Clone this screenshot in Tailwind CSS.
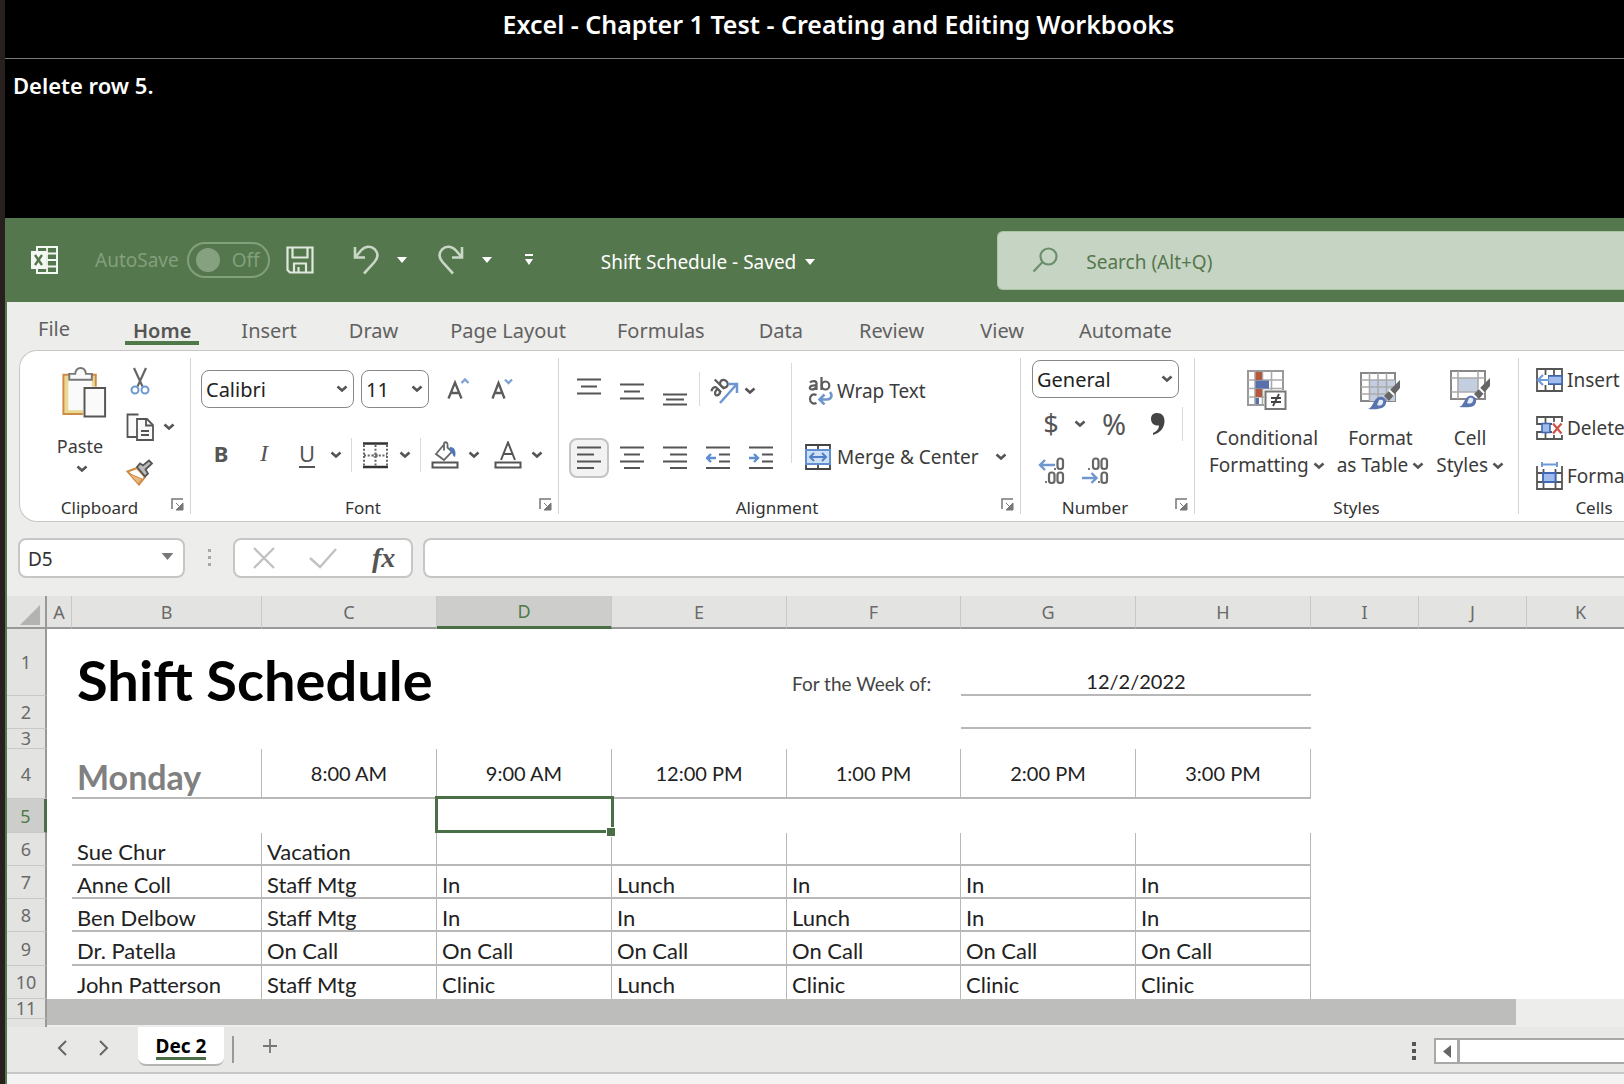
<!DOCTYPE html>
<html lang="en">
<head>
<meta charset="utf-8">
<title>Shift Schedule - Saved</title>
<script src="https://cdn.jsdelivr.net/npm/@tailwindcss/browser@4"></script>
</head>
<body class="min-h-screen overflow-x-hidden bg-[#281f1f] pl-[5px] font-['Noto_Sans',sans-serif] text-[#3b3b3b]">

<!-- shared icon shapes -->
<svg class="hidden" aria-hidden="true">
  <symbol id="chev" viewBox="0 0 12 8"><path d="M1.500 1.500 6 5.500l4.500-4" fill="none" stroke="#555" stroke-width="2.600"/></symbol>
  <symbol id="tri" viewBox="0 0 10 6"><path d="M0 0h10L5 6z" fill="currentColor"/></symbol>
  <symbol id="launch" viewBox="0 0 13 13"><path d="M1 11V1h11" fill="none" stroke="#777" stroke-width="1.500"/><path d="M5 5l6 6M12 5v7H5z" fill="#777" stroke="#777"/></symbol>
</svg>

<!-- task header -->
<header class="h-[218px] bg-black text-white">
  <h1 class="h-[59px] border-b border-[#777] pt-[3px] pl-[48px] text-center text-[25px] leading-[42px] font-semibold">Excel - Chapter 1 Test - Creating and Editing Workbooks</h1>
  <p class="px-2 pt-[10px] text-[22px] leading-8 font-semibold">Delete row 5.</p>
</header>

<div class="overflow-hidden bg-[#ededeb]">
  <!-- title bar -->
  <div class="flex h-[84px] items-center bg-[#55774d] pl-[26px] text-[19px] text-white">
    <svg class="h-[28px] w-[28px]" viewBox="0 0 28 28"><path d="M6 1h20v26H6z" fill="none" stroke="#f4f8f3" stroke-width="2"/><path d="M16 1v26M6 7.500h20M16 14h10M6 20.500h20" stroke="#f4f8f3" stroke-width="1.800"/><path d="M0 5h15v18H0z" fill="#f4f8f3"/><path d="M4 9l7 10M11 9L4 19" stroke="#55774d" stroke-width="2.400"/></svg>
    <label class="ml-[36px] flex items-center text-[#83a07d]">AutoSave
      <input type="checkbox" class="sr-only">
      <span class="ml-2 flex h-9 w-[83px] items-center justify-between rounded-full border-2 border-[#83a07d] pr-2 pl-[7px]"><span class="h-6 w-6 rounded-full bg-[#86a180]"></span>Off</span>
    </label>
    <button class="ml-4" aria-label="Save"><svg class="h-7 w-7" viewBox="0 0 28 28" fill="none" stroke="#dfe8dd" stroke-width="2.200"><path d="M1.500 1.500h25v25H4l-2.500-2.500zM6.500 2v9.500h15V2M8 26v-8.500h12V26M12.500 21v5"/></svg></button>
    <div class="ml-[39px] flex items-center gap-[18px]">
      <button aria-label="Undo"><svg class="h-[30px] w-[26px]" viewBox="0 0 26 30" fill="none" stroke="#c9d7c6" stroke-width="2.600"><path d="M2 2v10.500h10M2.500 12 8 5.500C12 1 18 .5 22 4.500c3.500 4 3 8.500-.5 12.500L11 28.500"/></svg></button>
      <button aria-label="Undo options"><svg class="h-[6px] w-[10px]"><use href="#tri"/></svg></button>
    </div>
    <div class="ml-[31px] flex items-center gap-[18px]">
      <button aria-label="Redo"><svg class="h-[30px] w-[26px]" viewBox="0 0 26 30" fill="none" stroke="#c9d7c6" stroke-width="2.600"><path d="M24 2v10.500H14M23.500 12 18 5.500C14 1 8 .5 4 4.500.5 8.500 1 13 4.500 17L15 28.500"/></svg></button>
      <button aria-label="Redo options"><svg class="h-[6px] w-[10px]"><use href="#tri"/></svg></button>
    </div>
    <button class="ml-8" aria-label="Customize toolbar"><svg class="h-3 w-[10px]" viewBox="0 0 10 12" fill="#fff"><path d="M1 0h8v2H1zM1 5h8l-4 6z"/></svg></button>
    <button class="ml-[67px] flex items-center gap-[9px] pt-1 whitespace-nowrap">Shift Schedule - Saved <svg class="h-[6px] w-[10px]"><use href="#tri"/></svg></button>
    <label class="ml-[182px] flex h-[59px] min-w-0 flex-1 items-center gap-[28px] rounded-l-md border border-r-0 border-[#a9c3a3] bg-[#c6d4c3] pl-[34px]">
      <svg class="h-[26px] w-[26px] shrink-0" viewBox="0 0 26 26" fill="none" stroke="#6b8f6c" stroke-width="2.200"><circle cx="16.500" cy="9.500" r="8"/><path d="M10.500 15 1.500 24.500"/></svg>
      <input type="text" placeholder="Search (Alt+Q)" aria-label="Search" class="min-w-0 flex-1 pt-1 outline-none placeholder:text-[#55774d]">
    </label>
  </div>

  <div class="border-l-2 border-[#55774d]">
    <!-- ribbon tabs -->
    <nav class="flex h-[48px] pt-[13px] text-[20px] leading-8 whitespace-nowrap text-[#616161]">
      <a href="#" class="-mt-[2px] ml-[31px]">File</a>
      <a href="#" class="ml-[55px] h-[30px] border-b-4 border-[#4e7a49] px-2 font-semibold text-[#555]">Home</a>
      <a href="#" class="ml-[42px]">Insert</a>
      <a href="#" class="ml-[52px]">Draw</a>
      <a href="#" class="ml-[52px]">Page Layout</a>
      <a href="#" class="ml-[51px]">Formulas</a>
      <a href="#" class="ml-[54px]">Data</a>
      <a href="#" class="ml-[56px]">Review</a>
      <a href="#" class="ml-[56px]">View</a>
      <a href="#" class="ml-[55px]">Automate</a>
    </nav>

    <!-- ribbon -->
    <div class="ml-3 flex h-[172px] rounded-l-[18px] border border-r-0 border-[#c6c6c6] bg-white text-[17px] whitespace-nowrap">
      <!-- Clipboard -->
      <section class="my-[7px] flex w-[171px] shrink-0 flex-col border-r border-[#d4d4d4]">
        <div class="flex h-[143px] shrink-0 pt-[9px]">
          <button class="ml-[36px] flex w-[52px] flex-col items-center self-start">
            <svg class="ml-1 h-[51px] w-[48px]" viewBox="0 0 48 52"><path d="M3 8h33v40H3z" fill="#ead994" stroke="#cf8a45" stroke-width="2"/><path d="M8 12h24v32H8z" fill="#fafafa"/><path d="M9 13V7h6c1-8 10-8 11 0h6v6z" fill="#fafafa" stroke="#777" stroke-width="2"/><path d="M23 20h25v32H23z" fill="#fff"/><path d="M24.500 21.500h21v29h-21z" fill="#fafafa" stroke="#555" stroke-width="2"/></svg>
            <span class="mt-4 pr-1 text-[18px] leading-6">Paste</span>
            <svg class="mt-[7px] h-2 w-3"><use href="#chev"/></svg>
          </button>
          <div class="ml-[18px] flex flex-col items-start gap-[18px]">
            <button class="ml-1" aria-label="Cut"><svg class="h-[28px] w-[20px]" viewBox="0 0 20 28" fill="none"><path d="M4 1l8.500 18.500M16 1 7.500 19.500" stroke="#666" stroke-width="2.200"/><circle cx="5" cy="23" r="3.500" stroke="#6f9ad0" stroke-width="2"/><circle cx="15" cy="23" r="3.500" stroke="#6f9ad0" stroke-width="2"/></svg></button>
            <div class="flex items-center gap-[9px]">
              <button aria-label="Copy"><svg class="h-[28px] w-[28px]" viewBox="0 0 28 28" stroke="#555" stroke-width="1.800" fill="#fafafa"><path d="M11 24H1.500V1.500h11"/><path d="M11 6h10l6 6v15H11z"/><path d="M20 6v6.500h6.500M15 18h8M15 22h8" fill="none"/></svg></button>
              <button aria-label="Copy options"><svg class="h-2 w-3"><use href="#chev"/></svg></button>
            </div>
            <button aria-label="Format Painter"><svg class="h-[27px] w-[27px]" viewBox="0 0 27 27"><path d="M1.500 12.500 11 9l8 9-6 7.500z" fill="#fff" stroke="#cf8a45" stroke-width="2"/><path d="M3 14.500l13 5.500-4 5z" fill="#e9b77c" stroke="#cf8a45"/><path d="M11 8l8 9.500 3-3-2.500-4L26 4.500 23 1.500l-6 5-3-2z" fill="#bbb" stroke="#555" stroke-width="1.800"/></svg></button>
          </div>
        </div>
        <div class="flex items-start text-[#333]"><span class="flex-1 pl-2 text-center leading-[13px]">Clipboard</span><button class="-mt-[3px] mr-[6px]" aria-label="Clipboard settings"><svg class="h-[13px] w-[13px]"><use href="#launch"/></svg></button></div>
      </section>

      <!-- Font -->
      <section class="my-[7px] flex w-[368px] shrink-0 flex-col border-r border-[#d4d4d4]">
        <div class="h-[143px] shrink-0 pt-3">
          <div class="flex items-center pl-[10px]">
            <span class="relative flex items-center"><select aria-label="Font" class="h-[38px] w-[153px] appearance-none rounded-lg border border-[#888] pt-px pl-1 text-[20px] text-[#222]"><option>Calibri</option></select><svg class="pointer-events-none absolute right-[6px] h-2 w-3"><use href="#chev"/></svg></span>
            <span class="relative ml-[7px] flex items-center"><select aria-label="Font size" class="h-[38px] w-[68px] appearance-none rounded-lg border border-[#888] pt-px pl-1 text-[20px] text-[#222]"><option>11</option></select><svg class="pointer-events-none absolute right-[6px] h-2 w-3"><use href="#chev"/></svg></span>
            <button class="ml-[18px]" aria-label="Increase font size"><svg class="h-[24px] w-[24px]" viewBox="0 0 24 24" fill="none"><path d="M1.500 21.500 8 5.500 14.500 21.500M4 16h8" stroke="#5c5c5c" stroke-width="2.300"/><path d="M14.500 6 18 2.500 21.500 6" stroke="#7fa3d4" stroke-width="2.400"/></svg></button>
            <button class="ml-[20px]" aria-label="Decrease font size"><svg class="h-[24px] w-[24px]" viewBox="0 0 24 24" fill="none"><path d="M1.500 21.500 7.500 6 13.500 21.500M4 16h7" stroke="#5c5c5c" stroke-width="2.300"/><path d="M14 2.500 17.500 6 21 2.500" stroke="#7fa3d4" stroke-width="2.400"/></svg></button>
          </div>
          <div class="mt-6 flex h-[46px] items-center pl-4 text-[22px] text-[#555]">
            <div class="-mt-1 flex gap-[15px]">
              <button class="w-7 font-bold">B</button>
              <button class="w-7 font-['Liberation_Serif',serif] text-[24px] italic">I</button>
              <button class="w-7 underline decoration-2 underline-offset-4">U</button>
            </div>
            <button class="mr-[9px] ml-[9px]" aria-label="Underline options"><svg class="h-2 w-3"><use href="#chev"/></svg></button>
            <div class="flex h-[34px] items-center border-x border-[#d9d9d9] pr-[9px] pl-[10px]">
              <button aria-label="Borders"><svg class="h-[27px] w-[27px]" viewBox="0 0 27 27" fill="none"><path d="M1 1.500h25M1 25h25" stroke="#333" stroke-width="2.400"/><path d="M2 3v21M25 3v21M13.500 3v21M2 13.500h23" stroke="#666" stroke-width="2" stroke-dasharray="2 1.700"/><circle cx="13.500" cy="13.500" r="2" stroke="#777"/></svg></button>
              <button class="ml-[10px]" aria-label="Border options"><svg class="h-2 w-3"><use href="#chev"/></svg></button>
            </div>
            <button class="ml-[10px]" aria-label="Fill color"><svg class="h-[28px] w-[28px]" viewBox="0 0 28 28" fill="none"><path d="M1.500 21.500h25v5h-25z" stroke="#555" stroke-width="2"/><path d="M13 3.500 5 13l8 6 8-8.500-4.500-4V3.500c0-3-3.500-3-3.500 0v6" stroke="#666" stroke-width="1.800"/><path d="M19 6c5 0 6.500 5 5 10-2 0-2-4-5-6z" fill="#4d78bb"/></svg></button>
            <button class="ml-[9px]" aria-label="Fill options"><svg class="h-2 w-3"><use href="#chev"/></svg></button>
            <button class="ml-[14px]" aria-label="Font color"><svg class="h-[28px] w-[28px]" viewBox="0 0 28 28" fill="none" stroke="#555" stroke-width="2"><path d="M1.500 21.500h25v5h-25zM7 19 14 1.500 21 19M9.500 13h9"/></svg></button>
            <button class="ml-[9px]" aria-label="Font color options"><svg class="h-2 w-3"><use href="#chev"/></svg></button>
          </div>
        </div>
        <div class="flex items-start text-[#333]"><span class="flex-1 pr-1 text-center leading-[13px]">Font</span><button class="-mt-[3px] mr-[6px]" aria-label="Font settings"><svg class="h-[13px] w-[13px]"><use href="#launch"/></svg></button></div>
      </section>

      <!-- Alignment -->
      <section class="my-[7px] flex w-[462px] shrink-0 flex-col border-r border-[#d4d4d4]">
        <div class="flex h-[143px] shrink-0">
          <div class="mt-[5px] h-[100px] w-[233px] border-r border-[#d9d9d9] pt-[7px] pl-[10px]">
            <div class="flex h-[38px] items-center">
              <div class="flex gap-[3px]">
                <button class="flex w-10 justify-center" aria-label="Top align"><svg class="h-[30px] w-6" viewBox="0 0 24 30"><path d="M0 5.500h24M4 12.500h16M0 19.500h24" stroke="#555" stroke-width="2"/></svg></button>
                <button class="flex w-10 justify-center" aria-label="Middle align"><svg class="h-[30px] w-6" viewBox="0 0 24 30"><path d="M0 10.500h24M4 17.500h16M0 24.500h24" stroke="#555" stroke-width="2"/></svg></button>
                <button class="flex w-10 justify-center" aria-label="Bottom align"><svg class="h-[30px] w-6 overflow-visible" viewBox="0 0 24 30"><path d="M0 20.500h24M3 25.500h18M0 30.500h24" stroke="#555" stroke-width="2"/></svg></button>
              </div>
              <div class="ml-[4px] flex h-[34px] items-center gap-[5px] border-l border-[#d9d9d9] pl-[9px]">
                <button aria-label="Orientation"><svg class="h-[30px] w-[30px]" viewBox="0 0 30 30" fill="none"><g stroke="#5c5c5c" stroke-width="2.300"><g transform="rotate(-45 10 14)"><path d="M2.500 11c2-2 6-1.500 6 1.500v6M8.500 13.500c-7 0-7 5-3 5 2 0 3-1.500 3-3"/><path d="M13 5v13.500"/><ellipse cx="16.500" cy="14.500" rx="3.500" ry="4"/></g></g><path d="M11 29 27 11M19 10h9v9" stroke="#6f97cd" stroke-width="2.500"/></svg></button>
                <button aria-label="Orientation options"><svg class="mt-1 h-2 w-3"><use href="#chev"/></svg></button>
              </div>
            </div>
            <div class="mt-[30px] flex gap-[3px]">
              <button class="flex h-10 w-10 items-center justify-center rounded-lg border-2 border-[#c4c4c4] bg-[#f2f2f2]" aria-label="Align left"><svg class="h-6 w-6 shrink-0" viewBox="0 0 24 24"><path d="M0 1.500h24M0 8.500h17M0 15.500h24M0 22h17" stroke="#555" stroke-width="2"/></svg></button>
              <button class="flex h-10 w-10 items-center justify-center" aria-label="Center"><svg class="h-6 w-6" viewBox="0 0 24 24"><path d="M0 1.500h24M4 8.500h16M0 15.500h24M4 22h16" stroke="#555" stroke-width="2"/></svg></button>
              <button class="flex h-10 w-10 items-center justify-center" aria-label="Align right"><svg class="h-6 w-6" viewBox="0 0 24 24"><path d="M0 1.500h24M7 8.500h17M0 15.500h24M7 22h17" stroke="#555" stroke-width="2"/></svg></button>
              <button class="flex h-10 w-10 items-center justify-center" aria-label="Decrease indent"><svg class="h-6 w-6" viewBox="0 0 24 24" fill="none"><path d="M0 1.500h24M13 8.500h11M13 15.500h11M0 22h24" stroke="#555" stroke-width="2"/><path d="M10 12H1.500M5 8l-4 4 4 4" stroke="#5f8fd0" stroke-width="2.400"/></svg></button>
              <button class="flex h-10 w-10 items-center justify-center" aria-label="Increase indent"><svg class="h-6 w-6" viewBox="0 0 24 24" fill="none"><path d="M0 1.500h24M13 8.500h11M13 15.500h11M0 22h24" stroke="#555" stroke-width="2"/><path d="M0 12h8.500M5 8l4 4-4 4" stroke="#5f8fd0" stroke-width="2.400"/></svg></button>
            </div>
          </div>
          <div class="flex flex-col items-start gap-[38px] pt-[19px] pl-[13px] text-[19px]">
            <button class="flex h-7 items-center gap-1 pl-[3px]">
              <svg class="h-[28px] w-[25px]" viewBox="0 0 25 28" fill="none"><g stroke="#5c5c5c" stroke-width="2.200"><path d="M2 5.500c2-2 6.500-2 6.500 1V13M8.500 8.500c-8-.5-8 4-4.500 4C6 12.500 8.500 11 8.500 9M13.500 0v13"/><ellipse cx="17.500" cy="8.500" rx="3.800" ry="4"/><path d="M8.500 18c-3.500-1.500-6.500 0-6.500 4s3.500 5.500 6.500 4"/></g><path d="M22 15c3 4 1 7.500-3 7.500h-7M16.500 17.500l-5 5 5 5" stroke="#6f97cd" stroke-width="2.600"/></svg>
              Wrap Text</button>
            <div class="flex h-7 items-center">
              <button class="flex items-center gap-[6px]">
                <svg class="h-[26px] w-[26px]" viewBox="0 0 26 26" fill="none"><path d="M1 1h24v24H1zM13 1v5M13 20v5" stroke="#444" stroke-width="1.800"/><path d="M1 6h24v14H1z" fill="#cfe0f5" stroke="#5f8fd0" stroke-width="2"/><path d="M5 13h16M9 9l-4 4 4 4M17 9l4 4-4 4" stroke="#4d80c8" stroke-width="2"/></svg>
                Merge &amp; Center</button>
              <button class="ml-[16px]" aria-label="Merge options"><svg class="h-2 w-3"><use href="#chev"/></svg></button>
            </div>
          </div>
        </div>
        <div class="flex items-start text-[#333]"><span class="flex-1 pr-[6px] text-center leading-[13px]">Alignment</span><button class="-mt-[3px] mr-[6px]" aria-label="Alignment settings"><svg class="h-[13px] w-[13px]"><use href="#launch"/></svg></button></div>
      </section>

      <!-- Number -->
      <section class="my-[7px] flex w-[174px] shrink-0 flex-col border-r border-[#d4d4d4]">
        <div class="h-[143px] shrink-0 pt-[2px] pl-[11px]">
          <span class="relative flex w-[147px] items-center"><select aria-label="Number format" class="h-[38px] w-full appearance-none rounded-lg border border-[#888] pt-[2px] pl-1 text-[20px] text-[#222]"><option>General</option></select><svg class="pointer-events-none absolute right-[6px] h-2 w-3"><use href="#chev"/></svg></span>
          <div class="mt-[9px] flex h-[34px] w-[151px] items-center border-r border-[#d9d9d9] text-[#555]">
            <button class="ml-[10px] w-[18px] text-[27px] leading-[34px]">$</button>
            <button class="ml-[14px]" aria-label="Currency options"><svg class="h-2 w-3"><use href="#chev"/></svg></button>
            <button class="ml-[13px] w-[30px] text-[29px] leading-[34px]">%</button>
            <button class="ml-[21px]" aria-label="Comma style"><svg class="h-[24px] w-[15px]" viewBox="0 0 15 24"><path d="M7 1c5 0 7.500 3 7.500 8 0 7-4.500 12-11.500 14v-2c4-2 6-4.500 6-7.500C4 14 1 11 1 7s2.500-6 6-6z" fill="#444"/></svg></button>
          </div>
          <div class="mt-[16px] flex gap-[17px] pl-[6px]">
            <button aria-label="Increase decimal"><svg class="h-[28px] w-[27px]" viewBox="0 0 27 28" fill="none"><path d="M17 8H2M7 3 2 8l5 5" stroke="#6f97cd" stroke-width="2.400"/><g stroke="#666" stroke-width="2.200"><rect x="19.500" y="1.500" width="5.500" height="10.500" rx="2.500"/><rect x="11" y="15.500" width="5.500" height="10.500" rx="2.500"/><rect x="19.500" y="15.500" width="5.500" height="10.500" rx="2.500"/></g><path d="M16 11h2v2h-2zM7 24h2v2H7z" fill="#777"/></svg></button>
            <button aria-label="Decrease decimal"><svg class="h-[28px] w-[27px]" viewBox="0 0 27 28" fill="none"><path d="M0 21h14M9.500 16l5 5-5 5" stroke="#6f97cd" stroke-width="2.400"/><g stroke="#666" stroke-width="2.200"><rect x="11" y="1.500" width="5.500" height="10.500" rx="2.500"/><rect x="19.500" y="1.500" width="5.500" height="10.500" rx="2.500"/><rect x="19.500" y="15.500" width="5.500" height="10.500" rx="2.500"/></g><path d="M6 11h2v2H6zM16 24h2v2h-2z" fill="#777"/></svg></button>
          </div>
        </div>
        <div class="flex items-start text-[#333]"><span class="flex-1 pr-[6px] text-center leading-[13px]">Number</span><button class="-mt-[3px] mr-[6px]" aria-label="Number settings"><svg class="h-[13px] w-[13px]"><use href="#launch"/></svg></button></div>
      </section>

      <!-- Styles -->
      <section class="my-[7px] flex w-[324px] shrink-0 flex-col border-r border-[#d4d4d4]">
        <div class="flex h-[143px] shrink-0 items-start justify-between pt-[12px] pr-[14px] pl-[14px] text-[19px] leading-[27px]">
          <button>
            <svg class="mx-auto h-[40px] w-[40px]" viewBox="0 0 40 40"><path d="M1 1h35v34H1z" fill="#fff" stroke="#999" stroke-width="2"/><path d="M8 1v34M15.500 1v34M24.500 1v34M1 10h35M1 18.500h35M1 27h35" stroke="#aaa" stroke-width="1.600"/><path d="M8.500 2H15v8H8.500zM8.500 19H15v8H8.500z" fill="#b5593c"/><path d="M8.500 10.500H22v8H8.500zM8.500 28H12v6H8.500z" fill="#5770ab"/><path d="M17 20h23v20H17z" fill="#fff"/><path d="M18.500 21.500h20v17.500h-20z" fill="#fff" stroke="#777" stroke-width="2"/><path d="M24 28h10M24 32h10M32 24l-6 12" stroke="#444" stroke-width="1.800"/></svg>
            <span class="mt-[15px] block">Conditional</span><span class="flex items-center justify-center gap-1">Formatting <svg class="h-2 w-3"><use href="#chev"/></svg></span>
          </button>
          <button>
            <svg class="mx-auto h-[40px] w-[40px]" viewBox="0 0 40 40"><path d="M1 3h34v28H1z" fill="#fff" stroke="#888" stroke-width="2"/><path d="M9.500 10H35v21H9.500z" fill="#c3cfe0"/><path d="M9.500 3v28M18 3v28M26.500 3v28M1 10h34M1 17h34M1 24h34" stroke="#aaa" stroke-width="1.600"/><path d="M40 10 24 26l5 5 11-13z" fill="#666"/><path d="M29 20l5 5" stroke="#fff" stroke-width="2"/><path d="M8 39c5-1 5-10 11-12 4-1 8 2 7 6-1 5-6 7-18 6z" fill="#5a74b0"/><path d="M19 30c3-1 5 0 4 3s-4 3-6 2z" fill="#e5ebf5"/></svg>
            <span class="mt-[15px] block">Format</span><span class="flex items-center justify-center gap-1">as Table <svg class="h-2 w-3"><use href="#chev"/></svg></span>
          </button>
          <button>
            <svg class="mx-auto h-[40px] w-[40px]" viewBox="0 0 40 40"><path d="M1 1h34v28H1z" fill="#fff" stroke="#888" stroke-width="2"/><path d="M8 8h20v14H8z" fill="#c3cfe0"/><path d="M8 1v28M28 1v28M1 8h34M1 22h34" stroke="#aaa" stroke-width="1.600"/><path d="M40 8 24 24l5 5 11-13z" fill="#666"/><path d="M29 18l5 5" stroke="#fff" stroke-width="2"/><path d="M9 37c5-1 5-9 10-11 4-1 8 2 7 6-1 5-6 6-17 5z" fill="#5a74b0"/><path d="M19 28c3-1 5 0 4 3s-4 3-6 2z" fill="#e5ebf5"/></svg>
            <span class="mt-[15px] block">Cell</span><span class="flex items-center justify-center gap-1">Styles <svg class="h-2 w-3"><use href="#chev"/></svg></span>
          </button>
        </div>
        <span class="text-center leading-[13px] text-[#333]">Styles</span>
      </section>

      <!-- Cells -->
      <section class="my-[7px] flex w-[150px] shrink-0 flex-col">
        <div class="flex h-[143px] shrink-0 flex-col items-start gap-5 pt-2 pl-[17px] text-[19px]">
          <button class="flex h-7 items-center gap-1"><svg class="h-[27px] w-[27px]" viewBox="0 0 27 27" fill="none"><path d="M1 2h25v22H1zM1 9h25M1 17h25M9.500 2v22M18 2v22" stroke="#555" stroke-width="1.800"/><path d="M12 9h14v8H12z" fill="#9fbcec" stroke="#3e68b5" stroke-width="1.600"/><path d="M2 8h10v10H2z" fill="#fff"/><path d="M13 13H2M7 8l-5 5 5 5" stroke="#6f9ad8" stroke-width="2.200"/></svg>Insert</button>
          <button class="flex h-7 items-center gap-1"><svg class="h-[27px] w-[27px]" viewBox="0 0 27 27" fill="none"><path d="M1 9V2h25v7zM1 24v-7h25v7zM9.500 2v7M18 2v7M9.500 17v7M18 17v7" stroke="#555" stroke-width="1.800"/><path d="M16 7h11v13H16z" fill="#fff"/><path d="M6 8.500h8v9H6z" fill="#9fbcec" stroke="#3e68b5" stroke-width="1.600"/><path d="M17 8.500l8.500 10M25.500 8.500l-8.500 10" stroke="#cf5146" stroke-width="2.200"/></svg>Delete</button>
          <button class="flex h-7 items-center gap-1"><svg class="h-[28px] w-[27px]" viewBox="0 0 27 28" fill="none"><path d="M1 4v23h25V4M1 11h25M1 20h25M7.500 7v20M19.500 7v20" stroke="#555" stroke-width="1.800"/><path d="M7 11h12.500v9H7z" fill="#9fbcec" stroke="#3e68b5" stroke-width="1.800"/><path d="M6 2.500h15M6 0v5M21 0v5" stroke="#6f9ad8" stroke-width="2"/></svg>Format</button>
        </div>
        <span class="text-center leading-[13px] text-[#333]">Cells</span>
      </section>
    </div>

    <!-- formula bar -->
    <div class="flex h-[74px] items-center pb-[2px] pl-[11px]">
      <label class="relative flex items-center"><input type="text" aria-label="Name box" value="D5" class="h-[40px] w-[167px] rounded-lg border-2 border-[#c6c6c6] bg-white pt-[2px] pl-2 text-[19px] text-[#333]"><svg class="pointer-events-none absolute top-[15px] right-[11px] h-[7px] w-[13px] text-[#777]"><use href="#tri"/></svg></label>
      <svg class="ml-[23px] h-[18px] w-1" viewBox="0 0 4 18" fill="#a8a8a8"><path d="M0 0h3v3H0zM0 7h3v3H0zM0 14h3v3H0z"/></svg>
      <div class="ml-[21px] flex h-[40px] w-[180px] items-center rounded-lg border-2 border-[#c6c6c6] bg-white pl-[18px]">
        <button aria-label="Cancel"><svg class="h-[22px] w-[22px]" viewBox="0 0 22 22"><path d="M1 1l20 20M21 1 1 21" stroke="#c2c2c2" stroke-width="2.400"/></svg></button>
        <button class="ml-[34px]" aria-label="Enter"><svg class="h-[22px] w-[28px]" viewBox="0 0 28 22"><path d="M1 11l10 9L27 2" fill="none" stroke="#c2c2c2" stroke-width="2.400"/></svg></button>
        <button class="ml-[35px] font-['Liberation_Serif',serif] text-[28px] leading-9 font-bold text-[#555] italic">fx</button>
      </div>
      <input type="text" aria-label="Formula" class="ml-[10px] h-[40px] min-w-0 flex-1 rounded-l-lg border-2 border-r-0 border-[#c6c6c6] bg-white">
    </div>

    <!-- worksheet -->
    <table class="w-[1628px] table-fixed border-separate border-spacing-0 bg-white text-left font-['Lato',sans-serif] text-[22px] leading-5 whitespace-nowrap text-[#222] [&_tbody_th]:border-r-2 [&_tbody_th]:border-b [&_tbody_th]:border-r-[#999] [&_tbody_th]:border-b-[#c8c8c8] [&_tbody_th]:bg-[#e3e3e1] [&_tbody_th]:p-0 [&_tbody_th]:text-center [&_tbody_th]:font-['Noto_Sans',sans-serif] [&_tbody_th]:text-[18px] [&_tbody_th]:font-normal [&_tbody_th]:text-[#6a6a6a] [&_td]:p-0">
      <colgroup><col class="w-[40px]"><col class="w-[25px]"><col class="w-[190px]"><col class="w-[175px]"><col class="w-[175px]"><col class="w-[175px]"><col class="w-[174px]"><col class="w-[175px]"><col class="w-[175px]"><col class="w-[108px]"><col class="w-[108px]"><col class="w-[108px]"></colgroup>
      <thead class="font-['Noto_Sans',sans-serif] text-[18px] text-[#6a6a6a] [&_th]:h-[33px] [&_th]:border-r [&_th]:border-b-2 [&_th]:border-r-[#c8c8c8] [&_th]:border-b-[#999] [&_th]:bg-[#e3e3e1] [&_th]:p-0 [&_th]:text-center [&_th]:font-normal">
        <tr><th aria-label="Select all" class="border-r-2! border-r-[#999]!"><svg class="mt-[6px] ml-[13px] h-5 w-5" viewBox="0 0 20 20"><path d="M20 0v20H0z" fill="#b3b3b2"/></svg></th><th>A</th><th>B</th><th>C</th><th class="border-b-3! border-b-[#4a6e46]! bg-[#cdcecc]! text-[#4e7a49]">D</th><th>E</th><th>F</th><th>G</th><th>H</th><th>I</th><th>J</th><th>K</th></tr>
      </thead>
      <tbody>
        <tr class="h-[67px]"><th>1</th><td></td><td rowspan="2" colspan="4" class="pt-px! pl-[5px]! text-[56px] leading-[60px] font-bold text-black">Shift Schedule</td><td class="pt-[45px]! pl-[5px]! align-top text-[19px] text-[#444]">For the Week of:</td><td colspan="2" class="border-b-2 border-[#b8b8b8] pt-[42px]! text-center align-top text-[20px]">12/2/2022</td><td></td><td></td><td></td></tr>
        <tr class="h-[33px]"><th>2</th><td></td><td></td><td colspan="2" class="border-b-2 border-[#b8b8b8]"></td><td></td><td></td><td></td></tr>
        <tr class="h-[20px]"><th class="leading-[19px]">3</th><td colspan="11"></td></tr>
        <tr class="h-[50px] text-[20px] [&_td]:border-[#b8b8b8] [&_td]:text-center"><th>4</th><td></td><td class="border-r border-b-2 pt-2! pl-[5px]! text-left! text-[34px] leading-9 font-bold text-[#808080]">Monday</td><td class="border-r border-b-2">8:00 AM</td><td class="border-r border-b-2">9:00 AM</td><td class="border-r border-b-2">12:00 PM</td><td class="border-r border-b-2">1:00 PM</td><td class="border-r border-b-2">2:00 PM</td><td class="border-r border-b-2">3:00 PM</td><td></td><td></td><td></td></tr>
        <tr class="h-[34px]"><th class="border-r-3! border-r-[#4a6e46]! bg-[#cdcecc]! text-[#4e7a49]!">5</th><td></td><td></td><td></td><td class="relative"><div class="absolute -top-[3px] -right-[2px] bottom-0 -left-[2px] border-3 border-[#4a6e46]"></div><div class="absolute -right-1 -bottom-1 h-[10px] w-[10px] border border-white bg-[#4a6e46]"></div></td><td></td><td></td><td></td><td></td><td></td><td></td><td></td></tr>
        <tr class="h-[33px] [&_td]:border-[#b8b8b8] [&_td]:pt-[6px] [&_td]:pl-[5px]"><th>6</th><td></td><td class="border-r border-b-2">Sue Chur</td><td class="border-r border-b-2">Vacation</td><td class="border-r border-b-2"></td><td class="border-r border-b-2"></td><td class="border-r border-b-2"></td><td class="border-r border-b-2"></td><td class="border-r border-b-2"></td><td></td><td></td><td></td></tr>
        <tr class="h-[33px] [&_td]:border-[#b8b8b8] [&_td]:pt-[6px] [&_td]:pl-[5px]"><th>7</th><td></td><td class="border-r border-b-2">Anne Coll</td><td class="border-r border-b-2">Staff Mtg</td><td class="border-r border-b-2">In</td><td class="border-r border-b-2">Lunch</td><td class="border-r border-b-2">In</td><td class="border-r border-b-2">In</td><td class="border-r border-b-2">In</td><td></td><td></td><td></td></tr>
        <tr class="h-[33px] [&_td]:border-[#b8b8b8] [&_td]:pt-[6px] [&_td]:pl-[5px]"><th>8</th><td></td><td class="border-r border-b-2">Ben Delbow</td><td class="border-r border-b-2">Staff Mtg</td><td class="border-r border-b-2">In</td><td class="border-r border-b-2">In</td><td class="border-r border-b-2">Lunch</td><td class="border-r border-b-2">In</td><td class="border-r border-b-2">In</td><td></td><td></td><td></td></tr>
        <tr class="h-[34px] [&_td]:border-[#b8b8b8] [&_td]:pt-[6px] [&_td]:pl-[5px]"><th>9</th><td></td><td class="border-r border-b-2">Dr. Patella</td><td class="border-r border-b-2">On Call</td><td class="border-r border-b-2">On Call</td><td class="border-r border-b-2">On Call</td><td class="border-r border-b-2">On Call</td><td class="border-r border-b-2">On Call</td><td class="border-r border-b-2">On Call</td><td></td><td></td><td></td></tr>
        <tr class="h-[33px] [&_td]:border-[#b8b8b8] [&_td]:pt-1 [&_td]:pl-[5px]"><th>10</th><td></td><td class="border-r">John Patterson</td><td class="border-r">Staff Mtg</td><td class="border-r">Clinic</td><td class="border-r">Lunch</td><td class="border-r">Clinic</td><td class="border-r">Clinic</td><td class="border-r">Clinic</td><td></td><td></td><td></td></tr>
        <tr class="h-[20px]"><th class="leading-[19px]">11</th><td rowspan="2" colspan="11" class="bg-[#ededec] align-top"><div class="h-[26px] w-[1469px] bg-[#bdbdbb]"></div></td></tr>
        <tr class="h-[8px]"><th class="border-b-0!"></th></tr>
      </tbody>
    </table>

    <!-- sheet tabs -->
    <div class="flex h-[47px] items-start border-b-2 border-[#c6c6c6] bg-[#e8e8e6]">
      <button class="mt-[13px] ml-[50px]" aria-label="Previous sheet"><svg class="h-4 w-[10px]" viewBox="0 0 10 16"><path d="M9 1 2 8l7 7" fill="none" stroke="#666" stroke-width="2"/></svg></button>
      <button class="mt-[13px] ml-[32px]" aria-label="Next sheet"><svg class="h-4 w-[10px]" viewBox="0 0 10 16"><path d="M1 1l7 7-7 7" fill="none" stroke="#666" stroke-width="2"/></svg></button>
      <a href="#" class="ml-[29px] flex h-[39px] w-[86px] justify-center rounded-b-lg border-b-2 border-[#b5b5b5] bg-white pt-[7px] text-[19px] font-bold text-black"><span class="h-[26px] border-b-3 border-[#4a6e46] leading-6">Dec 2</span></a>
      <span class="mt-[9px] ml-2 h-[27px] w-[2px] bg-[#999]"></span>
      <button class="mt-[12px] ml-[29px]" aria-label="New sheet"><svg class="h-[14px] w-[14px]" viewBox="0 0 14 14"><path d="M7 0v14M0 7h14" stroke="#777" stroke-width="1.800"/></svg></button>
      <svg class="mt-[15px] ml-auto h-[18px] w-1" viewBox="0 0 4 18" fill="#555"><path d="M0 0h4v4H0zM0 7h4v4H0zM0 14h4v4H0z"/></svg>
      <div class="mt-[11px] ml-[18px] flex h-[26px] w-[190px] border-2 border-r-0 border-[#a8a8a8] bg-white">
        <button class="flex w-[24px] items-center justify-center border-r-3 border-[#a8a8a8]" aria-label="Scroll left"><svg class="h-[13px] w-[8px]" viewBox="0 0 8 13"><path d="M8 0v13L0 6.500z" fill="#666"/></svg></button>
      </div>
    </div>
    <footer class="h-[11px] bg-[#f3f3f3]"></footer>
  </div>
</div>
</body>
</html>
